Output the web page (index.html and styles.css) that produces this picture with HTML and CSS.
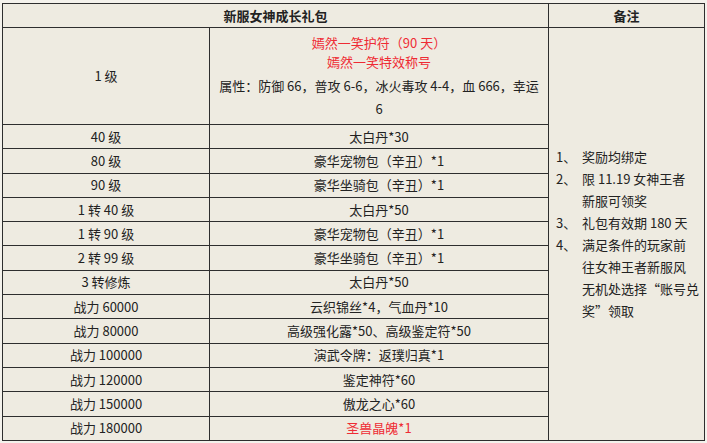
FILE: index.html
```html
<!DOCTYPE html>
<html lang="zh-CN">
<head>
<meta charset="utf-8">
<title>新服女神成长礼包</title>
<link rel="stylesheet" href="styles.css">
</head>
<body>
<table class="gift">
  <colgroup>
    <col class="c-level">
    <col class="c-reward">
    <col class="c-note">
  </colgroup>
  <thead>
    <tr class="head-row">
      <th colspan="2">新服女神成长礼包</th>
      <th>备注</th>
    </tr>
  </thead>
  <tbody>
    <tr class="first-row">
      <td>1 级</td>
      <td class="reward-multi">
        <p class="red line-s">嫣然一笑护符（90 天）</p>
        <p class="red line-s">嫣然一笑特效称号</p>
        <p class="line-l">属性：防御 66，普攻 6-6，冰火毒攻 4-4，血 666，幸运 6</p>
      </td>
      <td class="notes" rowspan="14">
        <ol class="note-list">
          <li><span class="num">1、</span><span class="txt">奖励均绑定</span></li>
          <li><span class="num">2、</span><span class="txt">限 11.19 女神王者<br>新服可领奖</span></li>
          <li><span class="num">3、</span><span class="txt">礼包有效期 180 天</span></li>
          <li><span class="num">4、</span><span class="txt">满足条件的玩家前<br>往女神王者新服风<br>无机处选择“账号兑<br>奖”领取</span></li>
        </ol>
      </td>
    </tr>
    <tr><td>40 级</td><td>太白丹*30</td></tr>
    <tr><td>80 级</td><td>豪华宠物包（辛丑）*1</td></tr>
    <tr><td>90 级</td><td>豪华坐骑包（辛丑）*1</td></tr>
    <tr><td>1 转 40 级</td><td>太白丹*50</td></tr>
    <tr><td>1 转 90 级</td><td>豪华宠物包（辛丑）*1</td></tr>
    <tr><td>2 转 99 级</td><td>豪华坐骑包（辛丑）*1</td></tr>
    <tr><td>3 转修炼</td><td>太白丹*50</td></tr>
    <tr><td>战力 60000</td><td>云织锦丝*4，气血丹*10</td></tr>
    <tr><td>战力 80000</td><td>高级强化露*50、高级鉴定符*50</td></tr>
    <tr><td>战力 100000</td><td>演武令牌：返璞归真*1</td></tr>
    <tr><td>战力 120000</td><td>鉴定神符*60</td></tr>
    <tr><td>战力 150000</td><td>傲龙之心*60</td></tr>
    <tr><td>战力 180000</td><td class="red">圣兽晶魄*1</td></tr>
  </tbody>
</table>
</body>
</html>
```

FILE: styles.css
```css
html, body {
  margin: 0;
  padding: 0;
  background: #f4f2ec;
}

body {
  padding: 3px 0 0 2px;
  font-family: "Noto Sans CJK SC", "Microsoft YaHei", "Liberation Sans", sans-serif;
  font-size: 13px;
  color: #222222;
}

.gift {
  width: 702px;
  table-layout: fixed;
  border-collapse: collapse;
  background: #eeebe1;
  border: 1px solid #2e2e2e;
}

.c-level { width: 207px; }
.c-reward { width: 339px; }
.c-note { width: 156px; }

.gift th,
.gift td {
  border: 1px solid #2e2e2e;
  padding: 0 6px;
  text-align: center;
  vertical-align: middle;
  height: 24.3px;
  line-height: 18px;
  box-sizing: border-box;
}

.gift th {
  font-weight: bold;
  height: 24px;
}

.first-row td {
  height: 96px;
}

.gift td.reward-multi {
  padding: 5px 8px 4px;
}

.reward-multi p {
  margin: 0;
}

.reward-multi .line-s {
  line-height: 19px;
}

.reward-multi .line-l {
  line-height: 23px;
  margin-top: 3px;
}

.red {
  color: #ee2b34;
}

.gift td.notes {
  text-align: left;
  padding: 0 4px 0 7px;
}

.note-list {
  list-style: none;
  margin: 0;
  padding: 0;
}

.note-list li {
  display: flex;
  line-height: 21.9px;
}

.note-list .num {
  flex: 0 0 26px;
}

.note-list .txt {
  white-space: nowrap;
}
```
